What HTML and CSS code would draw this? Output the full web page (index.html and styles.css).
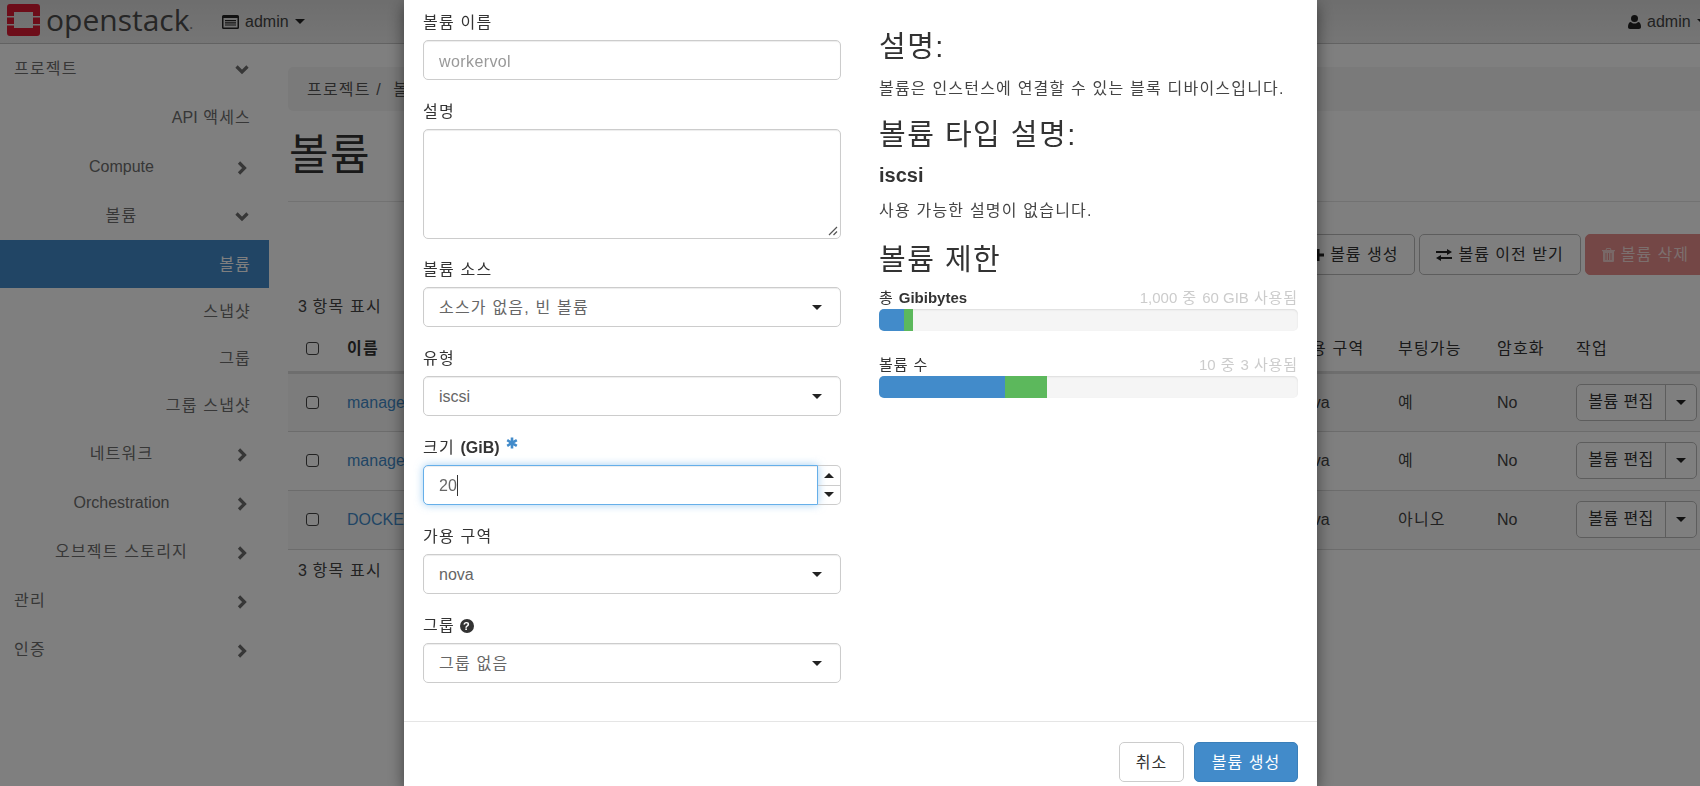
FILE: index.html
```html
<!DOCTYPE html>
<html lang="ko">
<head>
    <meta charset="UTF-8">
    <meta name="viewport" content="width=device-width, initial-scale=1.0">
    <title>볼륨 - OpenStack Dashboard</title>
    <link rel="stylesheet" href="styles.css">
</head>
<body>
    <header class="navbar">
        <a class="brand">
            <svg class="logo" width="33" height="32" viewBox="0 0 33 32">
                <path fill="#da1a32" fill-rule="evenodd" d="M3 0h27a3 3 0 0 1 3 3v26a3 3 0 0 1-3 3H3a3 3 0 0 1-3-3V3a3 3 0 0 1 3-3zM7 8v16h19V8zM0 12v1.500h7V12zM26 12v1.500h7V12zM0 20v1.500h7V20zM26 20v1.500h7V20z"/>
            </svg>
            <span class="lat brand-name">openstack</span><span class="lat brand-dot">.</span>
        </a>
        <div class="nav-menu">
            <svg width="17" height="14" viewBox="0 0 17 14"><path fill="#222" fill-rule="evenodd" d="M1.500 0h14A1.500 1.500 0 0 1 17 1.500v11a1.500 1.500 0 0 1-1.500 1.500h-14A1.500 1.500 0 0 1 0 12.500v-11A1.500 1.500 0 0 1 1.500 0zM1.500 3v9.500h14V3zM3 5h11v1.200H3zM3 7.200h11v1.200H3zM3 9.400h11v1.200H3z"/></svg>
            <span class="lat">admin</span>
            <i class="caret"></i>
        </div>
        <div class="nav-menu nav-user">
            <svg width="13" height="14" viewBox="0 0 13 14"><circle cx="6.500" cy="3.500" r="3.500" fill="#222"/><path fill="#222" d="M0 12c0-3 1-5 3-5 1 1 2 1.500 3.500 1.500S9 8 10 7c2 0 3 2 3 5 0 1.200-.8 2-2 2H2c-1.200 0-2-.8-2-2z"/></svg>
            <span class="lat">admin</span>
            <i class="caret"></i>
        </div>
    </header>

    <div class="layout">
        <nav class="sidebar">
            <a class="nav-item level-1">프로젝트<svg class="chev" viewBox="0 0 14 14"><path d="M1.500 3.500L7 9l5.500-5.500"/></svg></a>
            <a class="nav-item level-3"><span class="lat">API</span>&nbsp;액세스</a>
            <a class="nav-item level-2"><span class="lat">Compute</span><svg class="chev" viewBox="0 0 14 14"><path d="M4 1.500L9.500 7 4 12.500"/></svg></a>
            <a class="nav-item level-2">볼륨<svg class="chev" viewBox="0 0 14 14"><path d="M1.500 3.500L7 9l5.500-5.500"/></svg></a>
            <a class="nav-item nav-sub level-3 active">볼륨</a>
            <a class="nav-item nav-sub level-3">스냅샷</a>
            <a class="nav-item nav-sub level-3">그룹</a>
            <a class="nav-item nav-sub level-3">그룹 스냅샷</a>
            <a class="nav-item level-2">네트워크<svg class="chev" viewBox="0 0 14 14"><path d="M4 1.500L9.500 7 4 12.500"/></svg></a>
            <a class="nav-item level-2"><span class="lat">Orchestration</span><svg class="chev" viewBox="0 0 14 14"><path d="M4 1.500L9.500 7 4 12.500"/></svg></a>
            <a class="nav-item level-2">오브젝트 스토리지<svg class="chev" viewBox="0 0 14 14"><path d="M4 1.500L9.500 7 4 12.500"/></svg></a>
            <a class="nav-item level-1">관리<svg class="chev" viewBox="0 0 14 14"><path d="M4 1.500L9.500 7 4 12.500"/></svg></a>
            <a class="nav-item level-1">인증<svg class="chev" viewBox="0 0 14 14"><path d="M4 1.500L9.500 7 4 12.500"/></svg></a>
        </nav>

        <main class="content">
            <div class="breadcrumb">프로젝트 / &nbsp;볼륨</div>
            <h1 class="page-title">볼륨</h1>
            <div class="toolbar">
                <button class="btn">
                    <svg width="12" height="12" viewBox="0 0 12 12"><path fill="#222" d="M4.500 0h3v4.500H12v3H7.500V12h-3V7.500H0v-3h4.500z"/></svg>
                    볼륨 생성
                </button>
                <button class="btn">
                    <svg width="16" height="12" viewBox="0 0 16 12"><path fill="#222" d="M11 0l5 3-5 3V4H0V2h11zM5 6v2h11v2H5v2L0 9z"/></svg>
                    볼륨 이전 받기
                </button>
                <button class="btn btn-danger">
                    <svg width="13" height="14" viewBox="0 0 13 14"><path fill="#f2d0cf" fill-rule="evenodd" d="M4.500 0h4l1 2H13v1.200h-1V13a1 1 0 0 1-1 1H2a1 1 0 0 1-1-1V3.200H0V2h3.500zM5 1l-.4 1h3.800L8 1zM3.500 5v7h1V5zM6 5v7h1V5zM8.500 5v7h1V5z"/></svg>
                    볼륨 삭제
                </button>
            </div>
            <div class="count"><span class="lat">3</span> 항목 표시</div>
            <table class="volumes">
                <colgroup>
                    <col class="col-check"><col class="col-name"><col class="col-zone"><col class="col-boot"><col class="col-enc"><col class="col-act">
                </colgroup>
                <thead>
                    <tr>
                        <th><input type="checkbox" class="check"></th>
                        <th class="sorted">이름</th>
                        <th>가용 구역</th>
                        <th>부팅가능</th>
                        <th>암호화</th>
                        <th>작업</th>
                    </tr>
                </thead>
                <tbody>
                    <tr class="odd">
                        <td><input type="checkbox" class="check"></td>
                        <td><a class="lat link">manager-vol</a></td>
                        <td class="lat">nova</td>
                        <td>예</td>
                        <td class="lat">No</td>
                        <td><div class="split"><span class="split-main">볼륨 편집</span><span class="split-caret"><i class="caret"></i></span></div></td>
                    </tr>
                    <tr>
                        <td><input type="checkbox" class="check"></td>
                        <td><a class="lat link">manager-data</a></td>
                        <td class="lat">nova</td>
                        <td>예</td>
                        <td class="lat">No</td>
                        <td><div class="split"><span class="split-main">볼륨 편집</span><span class="split-caret"><i class="caret"></i></span></div></td>
                    </tr>
                    <tr class="odd">
                        <td><input type="checkbox" class="check"></td>
                        <td><a class="lat link">DOCKER</a></td>
                        <td class="lat">nova</td>
                        <td>아니오</td>
                        <td class="lat">No</td>
                        <td><div class="split"><span class="split-main">볼륨 편집</span><span class="split-caret"><i class="caret"></i></span></div></td>
                    </tr>
                </tbody>
            </table>
            <div class="count count-bottom"><span class="lat">3</span> 항목 표시</div>
        </main>
    </div>

    <div class="backdrop"></div>

    <div class="modal">
        <div class="modal-body">
            <form class="form-col">
                <div class="group">
                    <label>볼륨 이름</label>
                    <input class="control lat" type="text" placeholder="workervol">
                </div>
                <div class="group group-area">
                    <label>설명</label>
                    <div class="area"><svg class="grip" width="10" height="10" viewBox="0 0 10 10"><path d="M1 9l8-8M5.500 9L9 5.500"/></svg></div>
                </div>
                <div class="group">
                    <label>볼륨 소스</label>
                    <div class="control select">소스가 없음, 빈 볼륨</div>
                </div>
                <div class="group">
                    <label>유형</label>
                    <div class="control select lat">iscsi</div>
                </div>
                <div class="group">
                    <label>크기 <b class="lat">(GiB)</b>
                        <svg class="req" width="12" height="12" viewBox="0 0 12 12"><path d="M6 .5v11M1.200 3.200l9.600 5.600M10.800 3.200L1.200 8.800"/></svg>
                    </label>
                    <div class="number">
                        <div class="control focused lat">20<i class="text-caret"></i></div>
                        <div class="spin">
                            <span class="spin-btn"><i class="caret caret-up"></i></span>
                            <span class="spin-btn"><i class="caret"></i></span>
                        </div>
                    </div>
                </div>
                <div class="group">
                    <label>가용 구역</label>
                    <div class="control select lat">nova</div>
                </div>
                <div class="group">
                    <label>그룹
                        <svg class="help" width="14" height="14" viewBox="0 0 14 14"><circle cx="7" cy="7" r="7" fill="#333"/><text x="7" y="11" text-anchor="middle" font-size="11" font-weight="700" fill="#fff" font-family="Liberation Sans, sans-serif">?</text></svg>
                    </label>
                    <div class="control select">그룹 없음</div>
                </div>
            </form>
            <aside class="info-col">
                <h3 class="info-title title-first">설명:</h3>
                <p class="info-text text-first">볼륨은 인스턴스에 연결할 수 있는 블록 디바이스입니다.</p>
                <h3 class="info-title title-type">볼륨 타입 설명:</h3>
                <h4 class="lat type-name">iscsi</h4>
                <p class="info-text text-type">사용 가능한 설명이 없습니다.</p>
                <h3 class="info-title title-limit">볼륨 제한</h3>
                <div class="quota">
                    <div class="quota-head"><span>총 <b class="lat">Gibibytes</b></span><span class="quota-used"><span class="lat">1,000</span> 중 <span class="lat">60 GIB</span> 사용됨</span></div>
                    <div class="bar"><div class="fill-blue" style="width: 6%"></div><div class="fill-green" style="width: 2%"></div></div>
                </div>
                <div class="quota">
                    <div class="quota-head"><span>볼륨 수</span><span class="quota-used"><span class="lat">10</span> 중 <span class="lat">3</span> 사용됨</span></div>
                    <div class="bar"><div class="fill-blue" style="width: 30%"></div><div class="fill-green" style="width: 10%"></div></div>
                </div>
            </aside>
        </div>
        <div class="modal-footer">
            <button class="btn btn-cancel">취소</button>
            <button class="btn btn-primary">볼륨 생성</button>
        </div>
    </div>
</body>
</html>
```

FILE: styles.css
```css
html, body {
    height: 100%;
}
body {
    margin: 0;
    overflow: hidden;
    background: #fff;
    color: #333;
    font-family: "Liberation Sans", "Noto Sans CJK KR", sans-serif;
    font-size: 16px;
    line-height: 23px;
    letter-spacing: 1.200px;
}
.lat {
    letter-spacing: 0;
}
.caret {
    display: inline-block;
    width: 0;
    height: 0;
    border-top: 5px solid #222;
    border-left: 5px solid transparent;
    border-right: 5px solid transparent;
}
.caret-up {
    border-top: 0;
    border-bottom: 5px solid #222;
}

/* top bar */
.navbar {
    display: flex;
    align-items: center;
    height: 44px;
    box-sizing: border-box;
    border-bottom: 1px solid #c4c4c4;
    background: linear-gradient(to bottom, #dcdcdc, #ececec);
}
.brand {
    display: flex;
    align-items: center;
    width: 222px;
    padding-left: 7px;
    box-sizing: border-box;
}
.logo {
    margin-right: 6px;
    margin-top: -3px;
}
.brand-name {
    font-family: "Open Sans", sans-serif;
    font-size: 30px;
    font-weight: 500;
    line-height: 38px;
    color: #4c4c4c;
    margin-top: -4px;
}
.brand-dot {
    font-size: 12px;
    font-weight: 700;
    color: #888;
    margin-top: 8px;
}
.nav-menu {
    display: flex;
    align-items: center;
    gap: 6px;
    color: #444;
}
.nav-user {
    margin-left: auto;
    margin-right: -22px;
    width: 94px;
    flex: none;
}

/* sidebar */
.layout {
    display: flex;
}
.sidebar {
    flex: none;
    width: 269px;
}
.nav-item {
    display: flex;
    align-items: center;
    position: relative;
    height: 49px;
    box-sizing: border-box;
    color: #6e6e6e;
}
.nav-sub {
    height: 47px;
}
.level-1 {
    padding-left: 14px;
}
.level-2 {
    justify-content: center;
    padding-right: 26px;
}
.level-3 {
    justify-content: flex-end;
    padding-right: 18px;
}
.nav-item.active {
    height: 48px;
    background: #428bca;
    color: #fff;
}
.chev {
    position: absolute;
    right: 20px;
    top: 50%;
    width: 14px;
    height: 14px;
    margin-top: -6px;
    fill: none;
    stroke: #6e6e6e;
    stroke-width: 3.200;
}

/* main table area */
.content {
    flex: 1;
    min-width: 0;
    padding-left: 19px;
}
.breadcrumb {
    height: 44px;
    margin-top: 23px;
    padding-left: 19px;
    border-radius: 5px 0 0 5px;
    background: #f5f5f5;
    color: #555;
    line-height: 46px;
}
.page-title {
    margin: 21px 0 23px;
    font-size: 43px;
    line-height: 46px;
    font-weight: 400;
    letter-spacing: 1.500px;
    color: #333;
    padding-left: 1px;
}
.toolbar {
    display: flex;
    justify-content: flex-end;
    gap: 4px;
    height: 66px;
    box-sizing: border-box;
    padding-top: 32px;
    margin-right: -6px;
    border-top: 1px solid #e4e4e4;
}
.btn {
    display: inline-flex;
    align-items: center;
    justify-content: center;
    gap: 6px;
    height: 41px;
    padding: 0 16px;
    border: 1px solid #bbb;
    border-radius: 5px;
    background: #fff;
    color: #333;
    font: inherit;
    letter-spacing: 1px;
    white-space: nowrap;
}
.btn-danger {
    border-color: #e88f8c;
    background: #e88f8c;
    color: #f8dedd;
}
.count {
    margin-top: 28px;
    padding-left: 10px;
    color: #444;
}
.count-bottom {
    margin-top: 9px;
}
.volumes {
    width: 1417px;
    table-layout: fixed;
    border-collapse: collapse;
    margin-top: 11px;
}
.col-check { width: 46px; }
.col-name { width: 953px; }
.col-zone { width: 103px; }
.col-boot { width: 99px; }
.col-enc { width: 79px; }
.col-act { width: 137px; }
.volumes th {
    height: 43px;
    box-sizing: border-box;
    padding: 0 8px 3px;
    border-bottom: 3px solid #ddd;
    text-align: left;
    font-weight: 400;
}
.volumes th.sorted {
    padding-left: 13px;
    font-weight: 700;
}
.volumes td {
    height: 59px;
    box-sizing: border-box;
    padding: 0 8px;
    border-bottom: 1px solid #d8d8d8;
    color: #444;
}
.volumes tr.odd td {
    background: #f9f9f9;
}
.volumes td:nth-child(2) {
    padding-left: 13px;
}
.volumes th:first-child, .volumes td:first-child {
    padding-left: 18px;
}
.check {
    appearance: none;
    display: block;
    width: 13px;
    height: 13px;
    margin: 0;
    border: 1.500px solid #444;
    border-radius: 3px;
    background: #fff;
}
.link {
    color: #428bca;
}
.split {
    display: flex;
    width: 121px;
    height: 37px;
    box-sizing: border-box;
    border: 1px solid #bbb;
    border-radius: 5px;
    background: #fff;
    color: #333;
}
.split-main {
    flex: 1;
    text-align: center;
    line-height: 33px;
    letter-spacing: 0.400px;
    border-right: 1px solid #bbb;
}
.split-caret {
    display: flex;
    align-items: center;
    justify-content: center;
    width: 30px;
}

/* dim layer and dialog */
.backdrop {
    position: fixed;
    inset: 0;
    background: rgba(0, 0, 0, 0.5);
}
.modal {
    position: fixed;
    top: 0;
    left: 404px;
    width: 913px;
    height: 786px;
    display: flex;
    flex-direction: column;
    background: #fff;
    box-shadow: 0 5px 15px rgba(0, 0, 0, 0.5);
}
.modal-body {
    display: flex;
    gap: 38px;
    height: 721px;
    box-sizing: border-box;
    padding: 10px 19px 0;
}
.form-col {
    flex: none;
    width: 418px;
    margin: 0;
}
.group {
    margin-bottom: 19px;
}
.group-area {
    margin-bottom: 18px;
}
label {
    display: block;
    height: 23px;
    margin-bottom: 7px;
    color: #333;
    line-height: 25px;
}
.control {
    display: block;
    width: 100%;
    height: 40px;
    box-sizing: border-box;
    padding: 0 15px;
    border: 1px solid #ccc;
    border-radius: 5px;
    background: #fff;
    color: #666;
    font: inherit;
    line-height: 40px;
    box-shadow: inset 0 1px 1px rgba(0, 0, 0, 0.075);
}
input.control {
    padding-top: 3px;
    letter-spacing: 0.400px;
    outline: none;
}
input.control::placeholder {
    color: #999;
    opacity: 1;
}
.area {
    position: relative;
    height: 110px;
    box-sizing: border-box;
    border: 1px solid #ccc;
    border-radius: 5px;
    box-shadow: inset 0 1px 1px rgba(0, 0, 0, 0.075);
}
.grip {
    position: absolute;
    right: 2px;
    bottom: 2px;
    fill: none;
    stroke: #555;
    stroke-width: 1.200;
}
.select {
    position: relative;
}
.select::after {
    content: "";
    position: absolute;
    right: 18px;
    top: 17px;
    border-top: 5px solid #222;
    border-left: 5px solid transparent;
    border-right: 5px solid transparent;
}
.req {
    margin-left: 1px;
    vertical-align: 4px;
    fill: none;
    stroke: #428bca;
    stroke-width: 2.600;
}
.help {
    vertical-align: -2px;
    margin-left: -1px;
}
.number {
    display: flex;
}
.focused {
    flex: 1;
    width: auto;
    border-color: #66afe9;
    border-radius: 5px 0 0 5px;
    box-shadow: inset 0 1px 1px rgba(0, 0, 0, 0.075), 0 0 8px rgba(102, 175, 233, 0.6);
}
.text-caret {
    display: inline-block;
    width: 1px;
    height: 21px;
    vertical-align: -5px;
    background: #333;
}
.spin {
    display: flex;
    flex-direction: column;
    flex: none;
    width: 23px;
    height: 40px;
    box-sizing: border-box;
    border: 1px solid #ccc;
    border-left: 0;
    border-radius: 0 5px 5px 0;
}
.spin-btn {
    flex: 1;
    display: flex;
    align-items: center;
    justify-content: center;
}
.spin-btn + .spin-btn {
    border-top: 1px solid #ccc;
}
.info-col {
    flex: 1;
    min-width: 0;
}
.info-title {
    margin: 0;
    font-size: 29px;
    line-height: 40px;
    font-weight: 400;
    letter-spacing: 1.500px;
    color: #333;
}
.title-first { margin-top: 17px; }
.text-first { margin-top: 10px; }
.title-type { margin-top: 15px; }
.title-limit { margin-top: 18px; }
.text-type { margin-top: 12px; }
.info-text {
    margin-bottom: 0;
    color: #444;
}
.type-name {
    margin: 8px 0 0;
    font-size: 20px;
    line-height: 24px;
    color: #333;
}
.quota {
    margin-top: 8px;
}
.quota + .quota {
    margin-top: 24px;
}
.quota-head {
    display: flex;
    justify-content: space-between;
    font-size: 15px;
    line-height: 20px;
    letter-spacing: 0.900px;
}
.quota-used {
    color: #ccc;
}
.bar {
    display: flex;
    height: 22px;
    margin-top: 1px;
    overflow: hidden;
    border-radius: 5px;
    background: #f5f5f5;
    box-shadow: inset 0 1px 2px rgba(0, 0, 0, 0.1);
}
.fill-blue {
    background: #428bca;
}
.fill-green {
    background: #5cb85c;
}
.modal-footer {
    display: flex;
    justify-content: flex-end;
    gap: 10px;
    flex: 1;
    box-sizing: border-box;
    padding: 20px 19px 0;
    border-top: 1px solid #e5e5e5;
}
.modal-footer .btn {
    height: 40px;
}
.btn-cancel {
    width: 65px;
    padding: 0;
    border-color: #ccc;
}
.btn-primary {
    width: 104px;
    padding: 0;
    border-color: #3a7fb9;
    background: #428bca;
    color: #fff;
}
```
